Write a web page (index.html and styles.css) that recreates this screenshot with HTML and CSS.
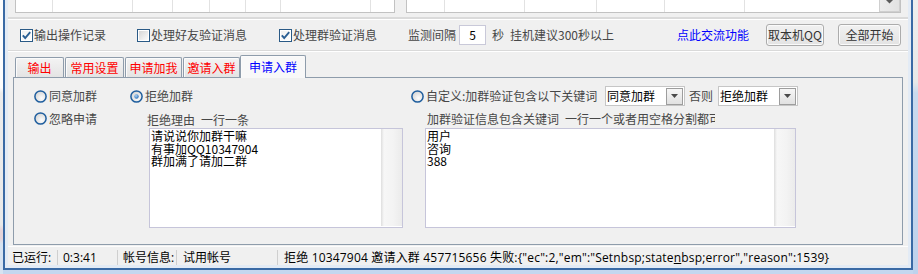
FILE: index.html
```html
<!DOCTYPE html>
<html lang="zh-CN">
<head>
<meta charset="utf-8">
<title>申请入群</title>
<link rel="stylesheet" href="styles.css">
</head>
<body>
<svg class="defs" width="0" height="0" aria-hidden="true">
  <defs>
    <linearGradient id="cbfill" x1="0" y1="0" x2="1" y2="1">
      <stop offset="0" stop-color="#d6d6d6"/>
      <stop offset="1" stop-color="#fbfbfb"/>
    </linearGradient>
    <radialGradient id="rdfill" cx="0.6" cy="0.65" r="0.7">
      <stop offset="0" stop-color="#fdfdfd"/>
      <stop offset="1" stop-color="#d2d2d2"/>
    </radialGradient>
    <radialGradient id="rddot" cx="0.4" cy="0.35" r="0.7">
      <stop offset="0" stop-color="#a9d3f7"/>
      <stop offset="1" stop-color="#2a6cb4"/>
    </radialGradient>
  </defs>
</svg>
<div class="desk">
  <div class="behind-left"></div>
  <div class="win">
    <div class="client">
      <div class="lists">
        <div class="list list-left">
          <span class="cell w37"></span><span class="cell w80"></span><span class="cell w40"></span><span class="cell w37"></span><span class="cell w36"></span><span class="cell w35"></span><span class="cell w90"></span><span class="cell fill"></span>
        </div>
        <div class="list list-right">
          <span class="cell w38"></span><span class="cell w80"></span><span class="cell w72"></span><span class="cell w68"></span><span class="cell w80"></span><span class="cell fill"></span>
          <span class="vscroll"><svg width="9" height="4" viewBox="0 0 9 4"><path d="M1 0 H8 L4.5 3.5 Z" fill="#5a5a5a"/></svg></span>
        </div>
      </div>

      <div class="options">
        <span class="check"><svg width="13" height="13" viewBox="0 0 13 13"><rect x="0.5" y="0.5" width="12" height="12" fill="#fff" stroke="#2a5a86"/><rect x="2" y="2" width="9" height="9" fill="url(#cbfill)" opacity="0.35"/><path d="M2.8 6.4 L5.2 9 L10.2 3.2" fill="none" stroke="#2a5f94" stroke-width="1.9"/></svg></span>
        <span class="opt-label w72">输出操作记录</span>
        <span class="check gap31"><svg width="13" height="13" viewBox="0 0 13 13"><rect x="0.5" y="0.5" width="12" height="12" fill="#fff" stroke="#2a5a86"/><rect x="2" y="2" width="9" height="9" fill="url(#cbfill)"/></svg></span>
        <span class="opt-label w96">处理好友验证消息</span>
        <span class="check gap32"><svg width="13" height="13" viewBox="0 0 13 13"><rect x="0.5" y="0.5" width="12" height="12" fill="#fff" stroke="#2a5a86"/><rect x="2" y="2" width="9" height="9" fill="url(#cbfill)" opacity="0.35"/><path d="M2.8 6.4 L5.2 9 L10.2 3.2" fill="none" stroke="#2a5f94" stroke-width="1.9"/></svg></span>
        <span class="opt-label w84">处理群验证消息</span>
        <span class="text-item gap31 w48">监测间隔</span>
        <span class="num-box">5</span>
        <span class="text-item gap6 w12">秒</span>
        <span class="text-item gap6 w167">挂机建议300秒以上</span>
        <span class="link w72">点此交流功能</span>
        <span class="btn btn-qq">取本机QQ</span>
        <span class="btn btn-all">全部开始</span>
      </div>

      <div class="tabs">
        <div class="tabstrip">
          <span class="tab t1">输出</span>
          <span class="tab t2">常用设置</span>
          <span class="tab t3">申请加我</span>
          <span class="tab t4">邀请入群</span>
          <span class="tab tab-on t5">申请入群</span>
        </div>
        <div class="panel">
          <div class="col col-a">
            <div class="row row1">
              <span class="radio"><svg width="13" height="13" viewBox="0 0 13 13"><circle cx="6.5" cy="6.5" r="5.6" fill="url(#rdfill)" stroke="#1f5e9e" stroke-width="1.5"/></svg></span>
              <span class="rlabel">同意加群</span>
            </div>
            <div class="row row2">
              <span class="radio"><svg width="13" height="13" viewBox="0 0 13 13"><circle cx="6.5" cy="6.5" r="5.6" fill="url(#rdfill)" stroke="#1f5e9e" stroke-width="1.5"/></svg></span>
              <span class="rlabel">忽略申请</span>
            </div>
          </div>
          <div class="col col-b">
            <div class="row row1">
              <span class="radio"><svg width="13" height="13" viewBox="0 0 13 13"><circle cx="6.5" cy="6.5" r="5.6" fill="url(#rdfill)" stroke="#1f5e9e" stroke-width="1.5"/><circle cx="6.5" cy="6.5" r="2.2" fill="url(#rddot)"/></svg></span>
              <span class="rlabel">拒绝加群</span>
            </div>
            <div class="row row2 lab-b">拒绝理由<span class="sp">一行一条</span></div>
            <div class="memo memo-b">
              <div class="memo-text"><div class="mline">请说说你加群干嘛</div><div class="mline">有事加QQ10347904</div><div class="mline">群加满了请加二群</div></div>
              <div class="memo-gutter"></div>
            </div>
          </div>
          <div class="col col-c">
            <div class="row row1">
              <span class="radio"><svg width="13" height="13" viewBox="0 0 13 13"><circle cx="6.5" cy="6.5" r="5.6" fill="url(#rdfill)" stroke="#1f5e9e" stroke-width="1.5"/></svg></span>
              <span class="rlabel w174">自定义:加群验证包含以下关键词</span>
              <span class="select sel1"><span class="sel-text">同意加群</span><span class="drop"><svg width="7" height="4" viewBox="0 0 7 4"><path d="M0 0 H7 L3.5 4 Z" fill="#4a4a4a"/></svg></span></span>
              <span class="rlabel otherwise">否则</span>
              <span class="select sel2"><span class="sel-text">拒绝加群</span><span class="drop"><svg width="7" height="4" viewBox="0 0 7 4"><path d="M0 0 H7 L3.5 4 Z" fill="#4a4a4a"/></svg></span></span>
            </div>
            <div class="row row2 lab-c"><span class="clip">加群验证信息包含关键词<span class="sp">一行一个或者用空格分割都可以</span></span></div>
            <div class="memo memo-c">
              <div class="memo-text"><div class="mline">用户</div><div class="mline">咨询</div><div class="mline">388</div></div>
              <div class="memo-gutter"></div>
            </div>
          </div>
        </div>
      </div>

      <div class="status">
        <span class="pane p1">已运行:</span>
        <span class="pane p2">0:3:41</span>
        <span class="pane p3">帐号信息:</span>
        <span class="pane p4">试用帐号</span>
        <span class="pane p5">拒绝 10347904 邀请入群 457715656 失败:{"ec":2,"em":"Setnbsp;state<u>n</u>bsp;error","reason":1539}</span>
      </div>
    </div>
  </div>
  <div class="behind-right"></div>
</div>
</body>
</html>
```

FILE: styles.css
```css
* { box-sizing: border-box; margin: 0; padding: 0; }
html, body { width: 918px; height: 274px; overflow: hidden; }
body {
  background: #c4d7ef;
  font-family: "Noto Sans CJK SC", "Noto Sans", sans-serif;
  font-size: 12px;
  color: #474747;
}
.defs { position: absolute; width: 0; height: 0; }
svg { display: block; }

.desk { display: flex; width: 918px; height: 274px; }
.behind-left {
  width: 3px; height: 274px;
  background: linear-gradient(#fdfdfd 0, #fdfdfd 32%, #ececec 34%, #e9e9e9 82%, #e5d4da 84%, #e5d4da 87%, #d7e3f1 89%);
}
.behind-right {
  width: 5px; height: 274px;
  background: linear-gradient(#eeeeee 0, #e8e8e8 30%, #c9daee 34%, #bed2ec 100%);
}
.win {
  width: 910px; height: 270px;
  border: 2px solid #3a6aa5; border-top: 0;
  background: #e3ebf5;
  padding: 0 3px 3px 3px;
}
.client {
  width: 900px; height: 265px;
  background: #f0f0f0;
  display: flex; flex-direction: column;
}

/* top list views */
.lists {
  height: 20px; flex: none;
  display: flex; align-items: flex-start;
  padding-left: 7px;
  border-bottom: 1px solid #ffffff;
  box-shadow: inset 0 -2px 0 #dadada;
}
.list {
  height: 13px; display: flex;
  background: #fff;
  border: 1px solid #c2c2c2; border-top: 0;
}
.list-left { width: 380px; }
.list-right { width: 495px; margin-left: 11px; }
.cell { height: 12px; border-right: 1px solid #e2e2e2; flex: none; }
.cell.fill { flex: 1; border-right: 0; }
.w35 { width: 35px; } .w36 { width: 36px; } .w37 { width: 37px; } .w38 { width: 38px; }
.w40 { width: 40px; } .w68 { width: 68px; } .w72 { width: 72px; } .w80 { width: 80px; }
.w90 { width: 90px; }
.vscroll {
  width: 21px; height: 12px; flex: none;
  background: linear-gradient(to right, #ececec, #e2e2e2);
  border: 1px solid #cfcfcf; border-top: 0;
  display: flex; justify-content: center; align-items: flex-start;
}

/* option row */
.options {
  height: 31px; flex: none;
  display: flex; align-items: center;
  padding-left: 12px;
  border-bottom: 1px solid #d9d9d9;
  box-shadow: 0 1px 0 #ffffff;
}
.check { width: 13px; height: 13px; flex: none; }
.gap31 { margin-left: 31px; } .gap32 { margin-left: 32px; } .gap6 { margin-left: 6px; }
.opt-label, .text-item, .link { line-height: 16px; white-space: nowrap; flex: none; }
.opt-label { margin-left: 1px; }
.w12 { width: 12px; } .w48 { width: 48px; } .w84 { width: 84px; } .w96 { width: 96px; }
.w167 { width: 167px; } .w174 { width: 174px; }
.num-box {
  width: 27px; height: 20px; margin-left: 3px; flex: none;
  border: 1px solid #c9c9d9; background: #fff;
  color: #000; text-align: center; line-height: 18px;
}
.link { color: #0000ff; }
.btn {
  height: 22px; flex: none;
  border: 1px solid #acacac; border-radius: 3px;
  background: linear-gradient(#f1f1f1, #e3e3e3);
  box-shadow: inset 0 0 0 1px #fafafa;
  color: #333; text-align: center; line-height: 20px;
}
.btn-qq { width: 58px; margin-left: 17px; }
.btn-all { width: 63px; margin-left: 14px; }

/* tabs */
.tabs { margin: 2px 5px 0 5px; display: flex; flex-direction: column; flex: none; }
.tabstrip {
  height: 24px; display: flex; align-items: flex-end;
  padding-left: 2px; position: relative; z-index: 1;
}
.tab {
  height: 20px; flex: none;
  border: 1px solid #8e9cab; border-bottom: 0;
  border-radius: 2px 2px 0 0;
  background: linear-gradient(#f3f3f3, #e4e4e4);
  box-shadow: inset 1px 1px 0 #fbfbfb;
  color: #ff0000; text-align: center; line-height: 19px;
}
.t1 { width: 49px; margin-right: 1px; }
.t2 { width: 59px; margin-right: 1px; }
.t3 { width: 57px; margin-right: 1px; }
.t4 { width: 57px; }
.tab-on {
  height: 23px; margin-bottom: -1px;
  background: #f8f8f8;
  color: #0000ff; line-height: 22px;
}
.t5 { width: 66px; }
.panel {
  height: 168px;
  border: 1px solid #8e9cab;
  background: #f0f0f0;
  display: flex;
  padding: 8px 0 0 20px;
}
.col { display: flex; flex-direction: column; flex: none; }
.col-a { width: 96px; }
.col-b { width: 273px; }
.col-c { width: 386px; margin-left: 8px; }
.row { display: flex; align-items: center; white-space: nowrap; }
.row1 { height: 20px; }
.row2 { height: 18px; margin-top: 4px; }
.radio { width: 13px; height: 13px; flex: none; }
.rlabel { margin-left: 2px; line-height: 16px; flex: none; }
.row2 .radio { margin-top: -2px; }
.sp { margin-left: 6px; }
.lab-b { padding-left: 17px; }
.lab-c { padding-left: 16px; }
.clip { display: block; width: 288px; overflow: hidden; line-height: 16px; }
.select {
  width: 80px; height: 20px; flex: none;
  border: 1px solid #c6c6c6; background: #fff;
  display: flex; align-items: center;
  padding-left: 1px;
}
.sel1 { margin-left: 5px; }
.sel-text { color: #000; line-height: 16px; }
.drop {
  width: 17px; height: 17px; margin-left: auto; margin-right: 1px;
  border: 1px solid #9d9d9d;
  background: linear-gradient(#f6f6f6, #e1e1e1);
  display: flex; align-items: center; justify-content: center;
}
.otherwise { margin-left: 4px; width: 24px; }
.sel2 { margin-left: 5px; }
.memo {
  height: 100px; display: flex;
  border: 1px solid #c6c5da; background: #fff;
}
.memo-b { margin-left: 19px; width: 254px; }
.memo-c { margin-left: 14px; width: 371px; }
.memo-text { flex: 1; padding: 1px 0 0 1px; color: #000; }
.mline { height: 12.5px; line-height: 12.5px; white-space: nowrap; }
.memo-gutter {
  width: 21px; margin: 0 0 1px 0;
  background: linear-gradient(to right, #dedede 0, #f7f7f7 3px, #f3f3f3 60%, #ebebeb 100%);
}

/* status bar */
.status {
  height: 19px; margin-top: 1px; padding-top: 2px; flex: none;
  display: flex; align-items: center;
  border-top: 1px solid #fdfdfd;
  color: #000;
  font-family: "Open Sans", "Noto Sans CJK SC", sans-serif;
}
.pane { height: 15px; line-height: 15px; white-space: nowrap; flex: none; }
.p1 { width: 50px; padding-left: 4px; border-right: 1px solid #cfcfcf; }
.p2 { width: 60px; padding-left: 5px; border-right: 1px solid #cfcfcf; }
.p3 { width: 59px; padding-left: 5px; border-right: 1px solid #cfcfcf; }
.p4 { width: 101px; padding-left: 6px; border-right: 1px solid #cfcfcf; }
.p5 { padding-left: 6px; letter-spacing: 0.18px; }
u { text-decoration: underline; text-underline-offset: 1px; }
```
